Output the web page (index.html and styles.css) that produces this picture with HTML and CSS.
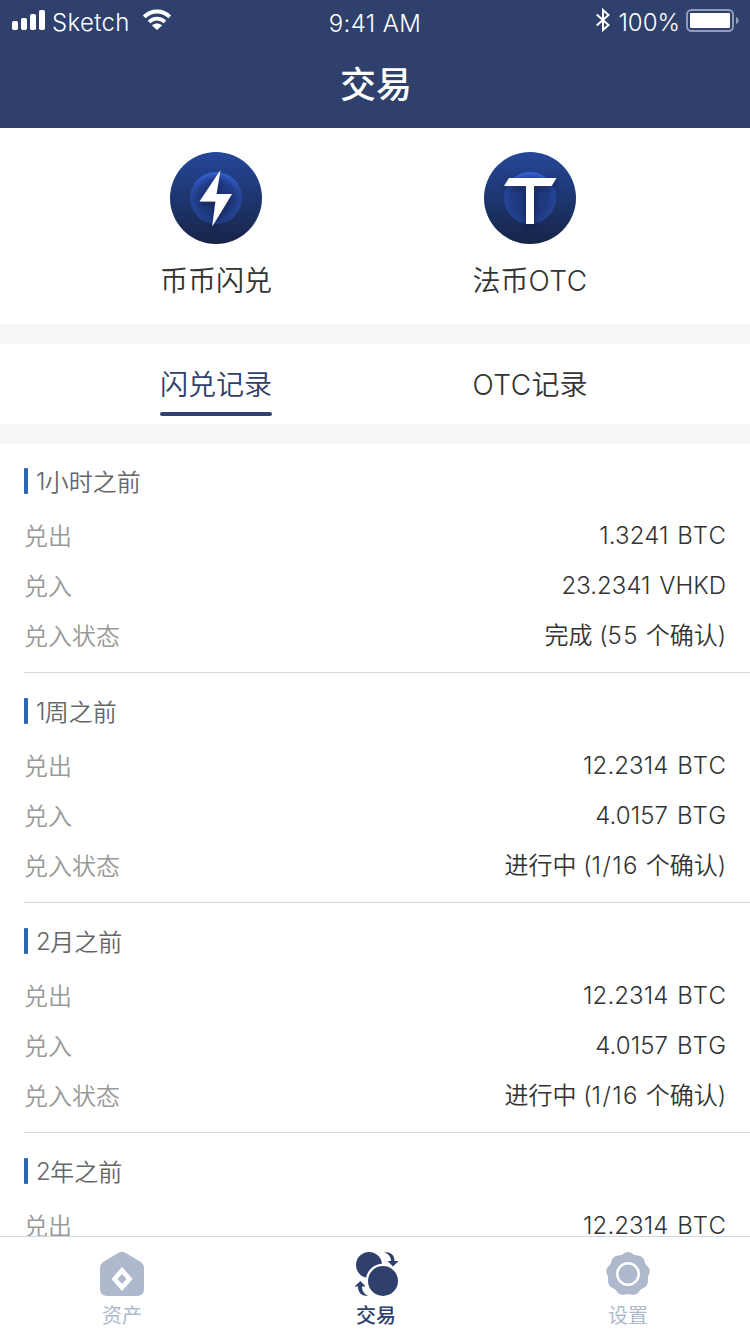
FILE: index.html
```html
<!DOCTYPE html>
<html lang="zh-CN">
<head>
<meta charset="utf-8">
<title>交易</title>
<link rel="stylesheet" href="styles.css">
</head>
<body>
<div class="app">
  <header class="header">
    <div class="status">
      <div class="status-left">
        <svg width="33" height="20" viewBox="0 0 33 20" fill="#fff"><rect x="0" y="11" width="6" height="9" rx="1.8"/><rect x="9" y="8" width="6" height="12" rx="1.8"/><rect x="18" y="4" width="6" height="16" rx="1.8"/><rect x="27" y="0" width="6" height="20" rx="1.8"/></svg>
        <span class="carrier">Sketch</span>
        <svg class="wifi" width="28" height="20" viewBox="0 0 28 20" fill="none"><path d="M1.2 6.8C8.5-.4 19.500-.4 26.800 6.800" stroke="#fff" stroke-width="4"/><path d="M6 11.900C10.500 7.500 17.500 7.500 22 11.900" stroke="#fff" stroke-width="3.800"/><path d="M9 15.400C12 13 16 13 19 15.400L14 20Z" fill="#fff"/></svg>
      </div>
      <span class="clock">9:41 AM</span>
      <div class="status-right">
        <svg class="bt" width="14" height="24" viewBox="0 0 14 24" fill="none" stroke="#fff" stroke-width="2"><path d="M.7 6.500 12.500 17 7 22V2L12.500 7 .7 17.500"/></svg>
        <span class="percent">100%</span>
        <svg class="battery" width="53" height="24" viewBox="0 0 53 24"><rect x="1" y="1" width="46" height="21" rx="4.500" fill="none" stroke="#8f9bb8" stroke-width="2"/><rect x="4" y="4" width="40" height="15" rx="1" fill="#fff"/><path d="M50 8c3.600 1 3.600 6 0 7z" fill="#8f9bb8"/></svg>
      </div>
    </div>
    <h1 class="title">交易</h1>
  </header>

  <section class="entries">
    <div class="entry">
      <svg width="92" height="92" viewBox="0 0 92 92">
        <defs>
          <linearGradient id="disc" x1="0" y1="0" x2="0" y2="1"><stop offset="0" stop-color="#25489a"/><stop offset="1" stop-color="#172446"/></linearGradient>
          <linearGradient id="core" x1="0" y1="0" x2="0" y2="1"><stop offset="0" stop-color="#3866e0"/><stop offset=".4" stop-color="#26499f"/><stop offset="1" stop-color="#213f88"/></linearGradient>
          <radialGradient id="shade"><stop offset="0" stop-color="#1c3473"/><stop offset=".7" stop-color="#1d3679" stop-opacity=".7"/><stop offset="1" stop-color="#1f3c8a" stop-opacity="0"/></radialGradient>
          <filter id="drop" x="-40%" y="-40%" width="180%" height="180%"><feDropShadow dx="0" dy="3" stdDeviation="3" flood-color="#081330" flood-opacity=".5"/></filter>
        </defs>
        <circle cx="46" cy="46" r="46" fill="url(#disc)"/>
        <circle cx="46" cy="46" r="26" fill="url(#core)"/>
        <circle cx="46" cy="46" r="26" fill="url(#shade)"/>
        <path d="M50.500 18 29.500 49.500H45.500L42.200 74.500 62 42H46.500Z" fill="#fff" filter="url(#drop)"/>
      </svg>
      <span class="entry-label">币币闪兑</span>
    </div>
    <div class="entry">
      <svg width="92" height="92" viewBox="0 0 92 92">
        <circle cx="46" cy="46" r="46" fill="url(#disc)"/>
        <circle cx="46" cy="46" r="26" fill="url(#core)"/>
        <circle cx="46" cy="46" r="26" fill="url(#shade)"/>
        <path d="M25 26H72.500L67.500 34H50V72H42V34H20Z" fill="#fff" filter="url(#drop)"/>
      </svg>
      <span class="entry-label">法币<span class="latin">OTC</span></span>
    </div>
  </section>

  <nav class="tabs">
    <div class="tab"><span class="tab-label tab-active">闪兑记录</span></div>
    <div class="tab"><span class="tab-label"><span class="latin">OTC</span>记录</span></div>
  </nav>

  <main class="records">
    <article class="record">
      <h2 class="age"><span class="num">1</span>小时之前</h2>
      <div class="row"><span class="key">兑出</span><span class="value amount">1.3241 <span class="unit">BTC</span></span></div>
      <div class="row"><span class="key">兑入</span><span class="value amount amount-long">23.2341 VHKD</span></div>
      <div class="row"><span class="key">兑入状态</span><span class="value">完成 (<span class="count">55</span> 个确认)</span></div>
    </article>
    <article class="record">
      <h2 class="age"><span class="num">1</span>周之前</h2>
      <div class="row"><span class="key">兑出</span><span class="value amount">12.2314 <span class="unit">BTC</span></span></div>
      <div class="row"><span class="key">兑入</span><span class="value amount">4.0157 <span class="unit">BTG</span></span></div>
      <div class="row"><span class="key">兑入状态</span><span class="value">进行中 (<span class="count">1/16</span> 个确认)</span></div>
    </article>
    <article class="record">
      <h2 class="age"><span class="num">2</span>月之前</h2>
      <div class="row"><span class="key">兑出</span><span class="value amount">12.2314 <span class="unit">BTC</span></span></div>
      <div class="row"><span class="key">兑入</span><span class="value amount">4.0157 <span class="unit">BTG</span></span></div>
      <div class="row"><span class="key">兑入状态</span><span class="value">进行中 (<span class="count">1/16</span> 个确认)</span></div>
    </article>
    <article class="record">
      <h2 class="age"><span class="num">2</span>年之前</h2>
      <div class="row"><span class="key">兑出</span><span class="value amount">12.2314 <span class="unit">BTC</span></span></div>
    </article>
  </main>

  <footer class="tabbar">
    <div class="item">
      <svg width="44" height="46" viewBox="0 0 44 46"><path d="M19 1.500Q22 0 25 1.500L40 10.500Q44 13 44 17V38Q44 45 37 45H7Q0 45 0 38V17Q0 13 4 10.500Z" fill="#afb9cd"/><path d="M22 17 31.500 28 22 39 12.500 28Z" fill="#fff" stroke="#fff" stroke-width="1.500" stroke-linejoin="round"/><path d="M22 23 26.500 28 22 33 17.500 28Z" fill="#afb9cd"/></svg>
      <span>资产</span>
    </div>
    <div class="item item-active">
      <svg width="44" height="46" viewBox="0 0 44 46" fill="#2e406b"><circle cx="14" cy="14" r="13"/><circle cx="28" cy="30" r="17.300" fill="#fff"/><circle cx="28" cy="30" r="15"/><path d="M29 1C36 1 39.500 4 39.500 10H43.500L38 15.500 32.500 10H36C36 6 34 3 29 1Z"/><path d="M13.500 45C6.500 45 3 42 3 35.500H-.5L5.500 30 10.500 35.500H7C7 40 9 43 13.500 45Z"/></svg>
      <span>交易</span>
    </div>
    <div class="item">
      <svg width="44" height="46" viewBox="0 0 44 46" fill="#afb9cd"><circle cx="22" cy="23" r="20.300"/><circle cx="22" cy="8" r="7"/><circle cx="31.640" cy="11.510" r="7"/><circle cx="36.770" cy="20.400" r="7"/><circle cx="34.990" cy="30.500" r="7"/><circle cx="27.130" cy="37.100" r="7"/><circle cx="16.870" cy="37.100" r="7"/><circle cx="9.010" cy="30.500" r="7"/><circle cx="7.230" cy="20.400" r="7"/><circle cx="12.360" cy="11.510" r="7"/><circle cx="22" cy="23" r="10.700" fill="none" stroke="#fff" stroke-width="2.500"/></svg>
      <span>设置</span>
    </div>
  </footer>
</div>
</body>
</html>
```
FILE: styles.css
```css
* { box-sizing: border-box; }
body { margin: 0; font-family: "Noto Sans CJK SC", sans-serif; color: #333; background: #fff; font-weight: 350; }
svg { display: block; flex: none; overflow: visible; }
.app { width: 750px; height: 1334px; display: flex; flex-direction: column; overflow: hidden; }
.header { height: 128px; flex: none; background: #2e406b; color: #fff; }
.status { height: 40px; display: grid; grid-template-columns: 1fr auto 1fr; padding: 0 12px; align-items: start; font-family: Inter, sans-serif; font-size: 24px; line-height: 30px; font-weight: 350; }
.status-left, .status-right { display: flex; padding-top: 10px; }
.status-right { justify-content: flex-end; }
.carrier { margin: -2px 0 0 7px; letter-spacing: .35px; }
.wifi { margin-left: 13px; }
.clock { padding-top: 9px; letter-spacing: .4px; }
.bt { margin: -2px 8px 0 0; }
.percent { margin: -2px 6px 0 0; letter-spacing: 0; }
.battery { margin-top: -1px; margin-right: -1px; }
.title { margin: 15px 0 0; padding-left: 2px; font-size: 36px; line-height: 54px; font-weight: 500; text-align: center; }
.entries { height: 196px; flex: none; display: flex; justify-content: center; gap: 198px; padding: 24px 4px 0 0; }
.entry { width: 116px; display: flex; flex-direction: column; align-items: center; }
.entry-label { margin-top: 15px; font-size: 28px; line-height: 40px; white-space: nowrap; }
.latin { font-family: Inter, sans-serif; font-weight: 350; letter-spacing: .5px; }
.tabs { height: 120px; flex: none; display: flex; justify-content: center; gap: 198px; padding-right: 4px; border-top: 20px solid #f6f6f6; border-bottom: 20px solid #f6f6f6; }
.tab { width: 116px; display: flex; justify-content: center; }
.tab-label { height: 72px; padding-top: 19px; font-size: 28px; line-height: 40px; white-space: nowrap; }
.tab-active { color: #2e406b; display: flex; flex-direction: column; justify-content: space-between; }
.tab-active::after { content: ""; height: 4px; border-radius: 2px; background: #2e406b; }
.records { flex: 1; min-height: 0; overflow: hidden; padding-left: 24px; }
.record { height: 229px; padding-top: 24px; border-bottom: 1px solid #d8d8d8; margin-bottom: 1px; }
.age { margin: 0 0 16px; height: 26px; display: flex; align-items: center; font-size: 24px; line-height: 26px; font-weight: 350; color: #666; }
.age::before { content: ""; width: 4px; height: 26px; border-radius: 1px; background: #2b67b5; margin-right: 8px; }
.num { font-family: Inter, sans-serif; font-weight: 350; padding-top: 2px; margin-right: -.6px; }
.row { height: 50px; display: flex; justify-content: space-between; align-items: center; padding-right: 24px; font-size: 24px; line-height: 36px; }
.key { color: #999; }
.value { font-family: Inter, "Noto Sans CJK SC", sans-serif; padding-top: 2px; white-space: nowrap; }
.amount { word-spacing: 2px; letter-spacing: .1px; }
.amount-long { letter-spacing: 0; }
.unit { letter-spacing: 1.2px; margin-right: -1.2px; }
.count { letter-spacing: 1.4px; }
.tabbar { height: 98px; flex: none; display: flex; justify-content: space-between; padding: 14px 98px 0; border-top: 1px solid #d0d7e0; background: #fff; }
.item { width: 48px; display: flex; flex-direction: column; align-items: center; color: #afb9cd; font-size: 20px; line-height: 28px; font-weight: 400; }
.item span { margin-top: 4px; }
.item-active { color: #2e406b; font-weight: 500; padding-left: 2px; }
.item-active svg { margin-left: 2px; }
```
